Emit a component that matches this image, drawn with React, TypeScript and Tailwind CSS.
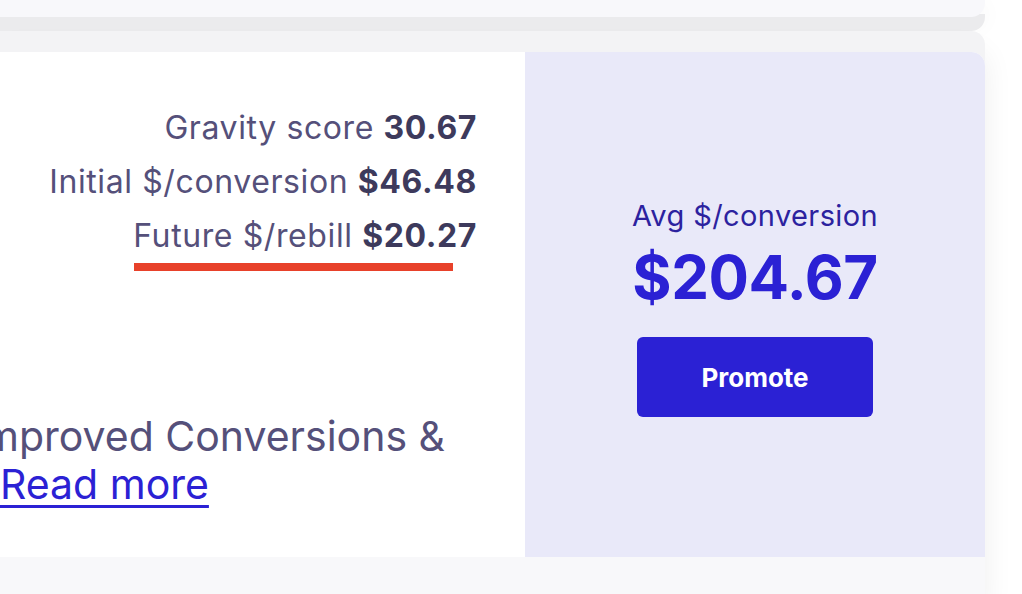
import React from "react";

const stats = [
  { label: "Gravity score", value: "30.67" },
  { label: "Initial $/conversion", value: "$46.48" },
  { label: "Future $/rebill", value: "$20.27" },
];

export default function App() {
  return (
    <div className="min-h-screen w-full overflow-hidden bg-white font-['Inter',sans-serif] pr-[37px]">
      {/* previous card, only its bottom edge is visible */}
      <div className="h-[17px] rounded-br-[14px] bg-[#f8f8fb] shadow-[0_14px_0_#ebebed,0_8px_24px_rgba(0,0,0,0.05)]" />

      {/* product card */}
      <div className="mt-[35px] rounded-r-[14px] overflow-hidden bg-white shadow-[0_-21px_0_#f3f3f5,0_0_30px_rgba(0,0,0,0.07)]">
        <div className="grid grid-cols-[525px_1fr] h-[505px]">
          {/* stats + description */}
          <div className="flex flex-col pt-[49px] pr-[48px]">
            <div className="flex flex-col items-end">
              {stats.map((s) => (
                <div key={s.label} className="text-[32px] leading-[54px] tracking-[0.6px] text-[#55507a] whitespace-nowrap">
                  {s.label} <span className="font-bold text-[#3d3a5c]">{s.value}</span>
                </div>
              ))}
              <div className="mr-[24px] h-[8px] w-[319px] bg-[#e8412a]" />
            </div>

            <div className="mt-[141px] text-[41px] leading-[48px] text-[#55507a]">
              <div className="flex w-[445px] justify-end whitespace-nowrap">
                <span>Improved Conversions &amp;</span>
              </div>
              <a href="#" className="text-[#2b21d4] underline decoration-[3px] underline-offset-[6px]">
                Read more
              </a>
            </div>
          </div>

          {/* average + cta */}
          <div className="flex flex-col items-center bg-[#e9e9f9] pt-[147px]">
            <div className="text-[29px] leading-[34px] tracking-[0.4px] text-[#2c229f]">Avg $/conversion</div>
            <div className="mt-[12px] text-[60px] leading-[64px] font-bold tracking-[-0.4px] text-[#2b21d4]">$204.67</div>
            <button className="mt-[28px] h-[80px] w-[236px] rounded-md bg-[#2b21d4] text-[26px] font-bold text-white">
              Promote
            </button>
          </div>
        </div>

        {/* card footer */}
        <div className="h-[60px] bg-[#f8f8fa]" />
      </div>
    </div>
  );
}
